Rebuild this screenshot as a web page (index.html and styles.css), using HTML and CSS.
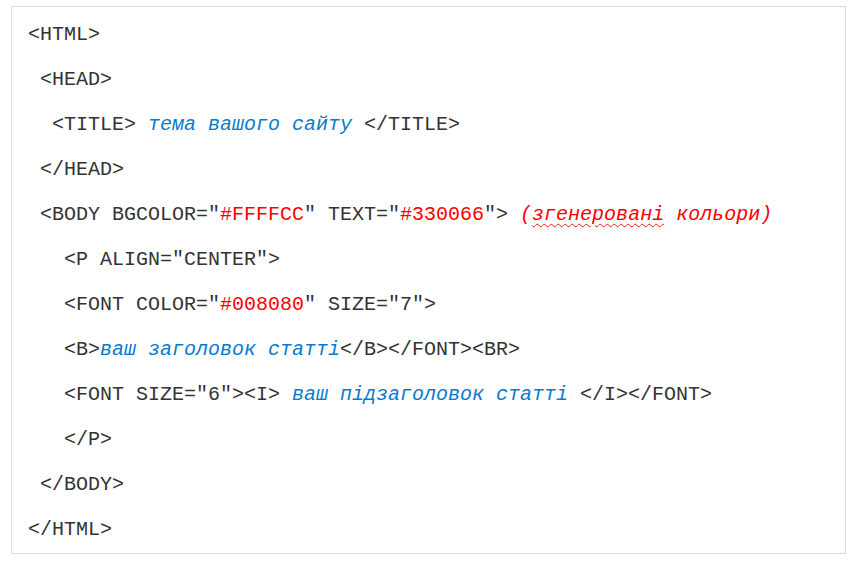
FILE: index.html
```html
<!DOCTYPE html>
<html lang="uk">
<head>
<meta charset="utf-8">
<link rel="stylesheet" href="styles.css">
</head>
<body>
<div class="code">
<div class="line">&lt;HTML&gt;</div>
<div class="line"> &lt;HEAD&gt;</div>
<div class="line">  &lt;TITLE&gt; <span class="txt">тема вашого сайту</span> &lt;/TITLE&gt;</div>
<div class="line"> &lt;/HEAD&gt;</div>
<div class="line"> &lt;BODY BGCOLOR="<span class="val">#FFFFCC</span>" TEXT="<span class="val">#330066</span>"&gt; <span class="note">(<span class="spell">згенеровані</span> кольори)</span></div>
<div class="line">   &lt;P ALIGN="CENTER"&gt;</div>
<div class="line">   &lt;FONT COLOR="<span class="val">#008080</span>" SIZE="7"&gt;</div>
<div class="line">   &lt;B&gt;<span class="txt">ваш заголовок статті</span>&lt;/B&gt;&lt;/FONT&gt;&lt;BR&gt;</div>
<div class="line">   &lt;FONT SIZE="6"&gt;&lt;I&gt; <span class="txt">ваш підзаголовок статті</span> &lt;/I&gt;&lt;/FONT&gt;</div>
<div class="line">   &lt;/P&gt;</div>
<div class="line"> &lt;/BODY&gt;</div>
<div class="line">&lt;/HTML&gt;</div>
</div>
</body>
</html>
```

FILE: styles.css
```css
html, body {
  margin: 0;
  padding: 0;
  background: #ffffff;
}

body {
  padding: 6px 0 0 11px;
}

.code {
  width: 835px;
  border: 1px solid #dddddd;
  padding: 5px 0 1px 16px;
  box-sizing: border-box;
  font-family: "Courier New", "Nimbus Mono PS", "Nimbus Mono L", "FreeMono", "Courier 10 Pitch", Courier, "Liberation Mono", monospace;
  font-size: 20px;
  color: #333333;
}

.line {
  white-space: pre;
  height: 45px;
  line-height: 45px;
}

.txt {
  color: #0a7acc;
  font-style: italic;
}

.val {
  color: #ff0000;
}

.note {
  color: #ff0000;
  font-style: italic;
}

.spell {
  text-decoration: underline wavy #e02020;
  text-decoration-thickness: 1px;
  text-underline-offset: 3px;
}
```
